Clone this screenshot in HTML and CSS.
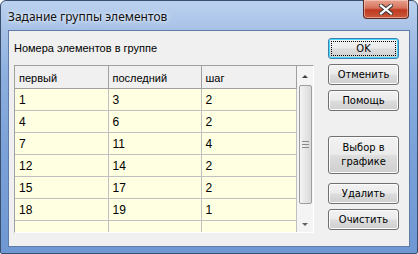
FILE: index.html
```html
<!DOCTYPE html>
<html lang="ru">
<head>
  <meta charset="UTF-8">
  <title>Задание группы элементов</title>
  <link rel="stylesheet" href="styles.css">
</head>
<body>

<div class="window">
  <div class="titlebar">
    <span class="title">Задание группы элементов</span>
    <button class="close" aria-label="Закрыть">
      <svg width="14" height="11" viewBox="0 0 14 11">
        <path d="M2 1.5 L12 9.5 M12 1.5 L2 9.5" stroke="#3b3b3b" stroke-width="4.2" stroke-linecap="square"/>
        <path d="M2 1.5 L12 9.5 M12 1.5 L2 9.5" stroke="#fff" stroke-width="2.2" stroke-linecap="square"/>
      </svg>
    </button>
  </div>

  <div class="client">
    <div class="left">
      <div class="caption">Номера элементов в группе</div>
      <div class="grid">
        <table class="cells">
          <tr class="head"><td>первый</td><td>последний</td><td>шаг</td></tr>
          <tr><td>1</td><td>3</td><td>2</td></tr>
          <tr><td>4</td><td>6</td><td>2</td></tr>
          <tr><td>7</td><td>11</td><td>4</td></tr>
          <tr><td>12</td><td>14</td><td>2</td></tr>
          <tr><td>15</td><td>17</td><td>2</td></tr>
          <tr><td>18</td><td>19</td><td>1</td></tr>
          <tr><td></td><td></td><td></td></tr>
        </table>
        <div class="scroll">
          <div class="arrow up"></div>
          <div class="track">
            <div class="thumb"><span class="grip"></span></div>
          </div>
          <div class="arrow down"></div>
        </div>
      </div>
    </div>

    <div class="buttons">
      <button class="btn default">OK</button>
      <button class="btn">Отменить</button>
      <button class="btn">Помощь</button>
      <button class="btn tall">Выбор в<br>графике</button>
      <button class="btn">Удалить</button>
      <button class="btn">Очистить</button>
    </div>
  </div>
</div>

</body>
</html>
```

FILE: styles.css
```css
* { margin: 0; padding: 0; box-sizing: border-box; }
body { width: 418px; height: 254px; overflow: hidden; background: #fff; font-family: 'Liberation Sans', Arial, sans-serif; }

.window { width: 418px; height: 254px; border: 1px solid #3a4f6e; border-radius: 6px 6px 2px 2px; background: linear-gradient(180deg, #bcd2ef 0%, #a6c0e6 12%, #8cafdf 30%, #7aa1d8 60%, #6f98d3 100%); display: flex; flex-direction: column; padding: 0 7px 6px 7px; }
.titlebar { height: 29px; display: flex; align-items: flex-start; justify-content: space-between; }
.title { font-family: 'Noto Sans', sans-serif; font-size: 12px; color: #111; margin-top: 7px; text-shadow: 0 0 6px #e8f1fb, 0 0 3px #e8f1fb; }
.close { width: 46px; height: 19px; margin-top: -1px; margin-right: 1px; border: 1px solid #5a2a24; border-top: none; border-radius: 0 0 4px 4px; background: linear-gradient(180deg, #e8a390 0%, #d6715b 45%, #c0391f 55%, #c95a3c 100%); display: flex; align-items: center; justify-content: center; box-shadow: inset 0 0 0 1px rgba(255,220,210,0.5); }

.client { flex: 1; background: #f0f0f0; border: 1px solid #5e7ca7; display: flex; padding: 7px 0 0 5px; }
.left { width: 300px; }
.caption { font-size: 11px; color: #000; height: 16px; margin-top: 4px; }
.grid { margin-top: 7px; width: 300px; height: 168px; border: 1px solid; border-color: #a0a0a0 #fff #fff #a0a0a0; display: flex; overflow: hidden; }

.cells { border-collapse: collapse; table-layout: fixed; width: 281px; align-self: flex-start; }
.cells td { height: 22px; border-right: 1px solid #c0c0c0; border-bottom: 1px solid #c0c0c0; background: #ffffe1; font-size: 12px; color: #000; padding: 1px 0 0 4px; }
.cells td:nth-child(1) { width: 93px; }
.cells td:nth-child(2) { width: 93px; }
.cells td:nth-child(3) { width: 95px; }
.cells .head td { background: #f0f0f0; font-size: 11px; border-right-color: #a0a0a0; border-bottom-color: #a0a0a0; padding-top: 2px; }

.scroll { width: 17px; height: 166px; display: flex; flex-direction: column; background: #f4f4f4; }
.arrow { height: 17px; position: relative; }
.arrow::after { content: ''; position: absolute; left: 5px; border-left: 3px solid transparent; border-right: 3px solid transparent; }
.up::after { top: 9px; border-bottom: 3px solid #404040; }
.down::after { top: 8px; border-top: 3px solid #606060; }
.track { flex: 1; padding: 2px 1px 10px 2px; }
.thumb { height: 119px; border: 1px solid #9e9e9e; border-radius: 2px; background: linear-gradient(90deg, #f4f4f4, #e6e6e6 50%, #d9d9d9); display: flex; align-items: center; justify-content: center; }
.grip { width: 7px; height: 7px; border-top: 1px solid #8a8a8a; border-bottom: 1px solid #8a8a8a; position: relative; }
.grip::after { content: ''; position: absolute; left: 0; right: 0; top: 2px; border-top: 1px solid #8a8a8a; }

.buttons { margin-left: 14px; display: flex; flex-direction: column; }
.btn { width: 71px; height: 21px; margin-bottom: 5px; border: 1px solid #707070; border-radius: 3px; background: linear-gradient(180deg, #f2f2f2 0%, #ebebeb 48%, #dddddd 52%, #cfcfcf 100%); font-family: 'DejaVu Sans Condensed', 'DejaVu Sans', sans-serif; font-size: 11px; color: #000; line-height: 14px; box-shadow: inset 0 0 0 1px #fcfcfc; }
.btn.default { border-color: #3c7fb1; box-shadow: inset 0 0 0 1px #48d8fb; outline: 1px dotted #000; outline-offset: -4px; }
.btn.tall { height: 38px; margin-top: 20px; margin-bottom: 9px; }
```
